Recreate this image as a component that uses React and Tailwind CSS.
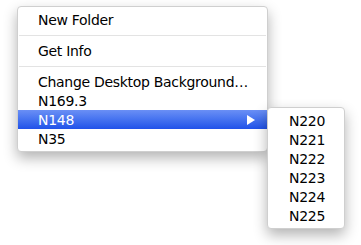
import React from 'react';

const font = { fontFamily: '"DejaVu Sans", "Lucida Grande", sans-serif' };

function Row({ children, active, arrow }) {
  return (
    <div
      className={
        'h-[19px] flex items-center pl-[20px] pr-[12px] text-[14px] leading-none tracking-[-0.3px] whitespace-nowrap ' +
        (active ? 'bg-gradient-to-b from-[#6a8ff5] to-[#2051e9] text-white' : 'text-black')
      }
    >
      <span className="flex-1">{children}</span>
      {arrow && (
        <svg width="8" height="10" viewBox="0 0 8 10">
          <path d="M0 0 L8 5 L0 10 Z" fill="#ffffff" />
        </svg>
      )}
    </div>
  );
}

function Separator() {
  return <div className="mt-[6px] mb-[5px] mx-[1px] h-px bg-[#e3e3e3]" />;
}

export default function App() {
  return (
    <div className="relative w-[361px] h-[245px] bg-white overflow-hidden" style={font}>
      <div className="pt-[6px] pl-[17px]">
        <div className="w-[251px] bg-white border border-[#cfcfcf] rounded-[4px] py-[3px] shadow-[0_6px_14px_rgba(0,0,0,0.3)]">
          <Row>New Folder</Row>
          <Separator />
          <Row>Get Info</Row>
          <Separator />
          <Row>Change Desktop Background…</Row>
          <Row>N169.3</Row>
          <Row active arrow>N148</Row>
          <Row>N35</Row>
        </div>
      </div>

      {/* submenu */}
      <div className="absolute left-[267px] top-[107px] w-[78px] bg-white border border-[#cfcfcf] rounded-[4px] py-[3px] pl-[1px] shadow-[0_6px_14px_rgba(0,0,0,0.3)]">
        {['N220', 'N221', 'N222', 'N223', 'N224', 'N225'].map((n) => (
          <Row key={n}>{n}</Row>
        ))}
      </div>
    </div>
  );
}
